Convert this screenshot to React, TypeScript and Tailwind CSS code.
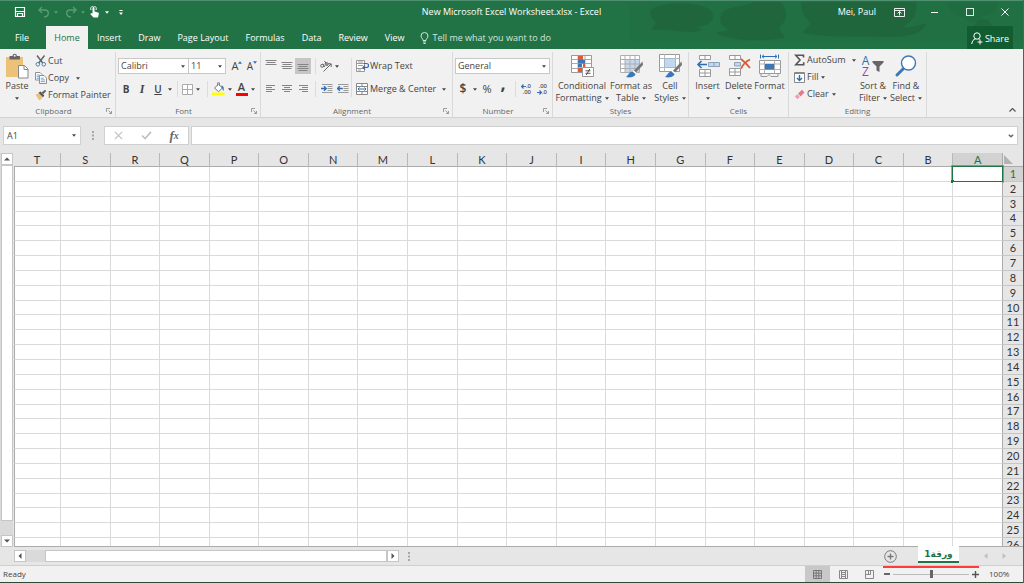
import type { ReactNode } from 'react';
import clsx from 'clsx';

const TABS = ['Insert', 'Draw', 'Page Layout', 'Formulas', 'Data', 'Review', 'View'];
const COLUMNS = 'TSRQPONMLKJIHGFEDCBA'.split('');
const ROWS = Array.from({ length: 26 }, (_, i) => i + 1);

/* ---------- small shared pieces ---------- */

function Caret({ className }: { className?: string }) {
  return (
    <svg viewBox="0 0 5 3" className={clsx('h-[3px] w-1 shrink-0', className)} aria-hidden="true">
      <path d="M0 0h5L2.5 3z" fill="currentColor" />
    </svg>
  );
}

interface ToolProps {
  label: string;
  className?: string;
  children: ReactNode;
}

function Tool({ label, className, children }: ToolProps) {
  return (
    <button type="button" aria-label={label} className={clsx('flex h-4 shrink-0 items-center justify-center', className)}>
      {children}
    </button>
  );
}

function Divider() {
  return <span className="mx-1 h-4 w-px shrink-0 bg-[#dcdcdc]" />;
}

interface GroupProps {
  title: string;
  launcher?: boolean;
  className?: string;
  children: ReactNode;
}

function Group({ title, launcher, className, children }: GroupProps) {
  return (
    <section aria-label={title} className={clsx('flex shrink-0 flex-col border-r border-[#dadada]', className)}>
      <div className="h-[54px]">{children}</div>
      <div className="flex h-3 items-center text-[8px] leading-3 text-[#666]">
        <span className="flex-1 text-center">{title}</span>
        {launcher && (
          <button type="button" aria-label={`${title} settings`} className="mr-[3px]">
            <svg viewBox="0 0 6 6" className="size-[6px]" fill="none" stroke="#888" strokeWidth=".8">
              <path d="M.5 4V.5H4M2.5 2.5l3 3M5.5 3v2.5H3" />
            </svg>
          </button>
        )}
      </div>
    </section>
  );
}

interface BigToolProps {
  lines: [string, string?];
  icon: ReactNode;
  className?: string;
}

function BigTool({ lines, icon, className }: BigToolProps) {
  const [first, second] = lines;
  return (
    <button type="button" className={clsx('flex shrink-0 flex-col items-center leading-3', className)}>
      <span className="flex h-7 items-center justify-center">{icon}</span>
      <span className="whitespace-nowrap">{first}</span>
      <span className="flex h-3 items-center gap-[3px] whitespace-nowrap">
        {second}
        <Caret />
      </span>
    </button>
  );
}

/* ---------- icons ---------- */

function PasteIcon() {
  return (
    <svg viewBox="0 0 24 26" className="h-[26px] w-6">
      <path d="M1 4h17v20H1z" fill="#ecc278" />
      <path d="M4.500 3h3a2.200 2.200 0 0 1 4.400 0h3v3.500H4.500z" fill="#666" />
      <circle cx="9.700" cy="2.800" r="1" fill="#f1f1f1" />
      <path d="M13.500 12.500h6l3.500 3.500v9h-9.500z" fill="#fff" stroke="#888" />
      <path d="M19 12.500V16.500h4" fill="none" stroke="#888" />
    </svg>
  );
}

function CutIcon() {
  return (
    <svg viewBox="0 0 12 12" className="size-3" fill="none">
      <path d="M2 .5 7.800 8M9.500 .5 3.800 8" stroke="#666" strokeWidth="1.500" />
      <circle cx="2.800" cy="9.300" r="1.800" stroke="#4a7fb8" />
      <circle cx="8.800" cy="9.300" r="1.800" stroke="#4a7fb8" />
    </svg>
  );
}

function CopyIcon() {
  return (
    <svg viewBox="0 0 12 12" className="size-3" fill="#fff" stroke="#777" strokeWidth=".8">
      <path d="M.5 .5h4.500l2 2V8H.5z" />
      <path d="M1.700 3h3M1.700 4.700h3M1.700 6.300h3" stroke="#5b8fc4" />
      <path d="M4.500 3.500H9l2.500 2.500v5.500h-7z" />
      <path d="M5.800 6.200h3M5.800 7.900h4.400M5.800 9.600h4.400" stroke="#5b8fc4" />
    </svg>
  );
}

function PainterIcon() {
  return (
    <svg viewBox="0 0 12 12" className="size-3">
      <path d="M.5 5.500 4 4l4 4-2 2.500-2 .8z" fill="#ecc278" />
      <path d="M3.500 3.800 5.500 2.500l3.800 4L8 8.200z" fill="#555" />
      <path d="M6.500 3.500 10 .800 11.300 2 8.300 5.300z" fill="#666" />
    </svg>
  );
}

function BordersIcon() {
  return (
    <svg viewBox="0 0 11 11" className="size-[11px]" fill="#fff" stroke="#aaa">
      <path d="M.5 .5h10v10H.5zM5.500 .5v10M.5 5.500h10" />
    </svg>
  );
}

function FillColorIcon() {
  return (
    <svg viewBox="0 0 13 14" className="h-[14px] w-[13px]">
      <path d="M2.500 6 6.500 2.200l4 3.800-4 3.600z" fill="#fff" stroke="#777" />
      <path d="M5.500 4V.8h2V4" fill="none" stroke="#777" strokeWidth=".8" />
      <path d="M9.500 3.500c2.200.300 2.800 2.500 2 5.500-1-.500-.500-2.500-2-3.500z" fill="#3c76b5" />
      <path d="M0 10.500h12.500v3H0z" fill="#ff0" />
    </svg>
  );
}

interface LinesIconProps {
  widths: number[];
  align?: 'left' | 'center' | 'right';
  offset?: 'top' | 'middle' | 'bottom';
}

function LinesIcon({ widths, align = 'center', offset = 'middle' }: LinesIconProps) {
  const top = { top: 0, middle: 2, bottom: 4 }[offset];
  return (
    <svg viewBox="0 0 12 12" className="size-3" stroke="#858585">
      {widths.map((w, i) => {
        const x = { left: 1, center: (12 - w) / 2, right: 11 - w }[align];
        const y = top + i * 2 + 0.5;
        return <path key={i} d={`M${x} ${y}h${w}`} />;
      })}
    </svg>
  );
}

function OrientationIcon() {
  return (
    <svg viewBox="0 0 12 12" className="size-3" fill="none" stroke="#666">
      <path d="M3.500 11.500 11 4M8 3.800h3.200V7" />
      <circle cx="2.200" cy="5.800" r="1.500" />
      <path d="M2.800 3.800 4.800 7M4.500 1l3 4.500" />
      <circle cx="6.600" cy="4" r="1.500" />
    </svg>
  );
}

function IndentIcon({ direction }: { direction: 'in' | 'out' }) {
  return (
    <svg viewBox="0 0 12 12" className="size-3" fill="none">
      <path d="M1 1.500h10.500M6.500 3.500h5M6.500 5.500h5M6.500 7.500h5M1 9.500h10.500" stroke="#999" />
      <path
        d={direction === 'in' ? 'M0 5.500h5M3 3.300l2.200 2.200L3 7.700' : 'M.8 5.500h5M2.800 3.300.600 5.500l2.200 2.200'}
        stroke="#2e6db4"
        strokeWidth="1.400"
      />
    </svg>
  );
}

function WrapIcon() {
  return (
    <svg viewBox="0 0 13 12" className="h-3 w-[13px]" fill="none">
      <path d="M.5 .5h8v11h-8z" fill="#fff" stroke="#999" />
      <path d="M.5 3.500h8M.5 8.500h8" stroke="#999" />
      <path d="M2 5.500h5M2 2h5M2 10h3" stroke="#888" strokeWidth=".8" />
      <path d="M8 3.500h2.500a1.800 1.800 0 0 1 0 4H7M9 5.500l-2 2 2 2" stroke="#2e6db4" strokeWidth="1.200" />
    </svg>
  );
}

function MergeIcon() {
  return (
    <svg viewBox="0 0 12 12" className="size-3" fill="none">
      <path d="M.5 .5h11v11H.5z" fill="#fff" stroke="#888" />
      <path d="M.5 3.500h11M.5 8.500h11M6 .5v3M6 8.500v3" stroke="#888" />
      <path d="M2 6h8M3.500 4.500 2 6l1.500 1.500M8.500 4.500 10 6 8.500 7.500" stroke="#2e6db4" />
    </svg>
  );
}

function DecimalArrow({ left }: { left?: boolean }) {
  return (
    <svg viewBox="0 0 5 5" className="size-[5px]" fill="none" stroke="#2e6db4" strokeWidth="1.200">
      <path d={left ? 'M5 2.500H1M2.500 .5l-2 2 2 2' : 'M0 2.500h4M2.500 .5l2 2-2 2'} />
    </svg>
  );
}

function DecimalIcon({ increase }: { increase?: boolean }) {
  return (
    <span className="flex flex-col text-[6px] leading-[6px] font-semibold text-[#555]">
      <span className="flex items-center justify-end">
        {increase && <DecimalArrow left />}
        {increase ? '.0' : '.00'}
      </span>
      <span className="flex items-center justify-end">
        {!increase && <DecimalArrow />}
        {increase ? '.00' : '.0'}
      </span>
    </span>
  );
}

function ConditionalIcon() {
  return (
    <svg viewBox="0 0 24 24" className="size-6" fill="none">
      <path d="M1.500 1.500h20v17h-20z" fill="#fff" stroke="#999" />
      <path d="M1.500 5.500h20M1.500 9.500h20M1.500 14.500h20M8 1.500v17M15 1.500v17" stroke="#aaa" />
      <path d="M8 2h5v4H8zM8 14h4v4H8z" fill="#dd5a35" />
      <path d="M8 6h7v3.500H8zM8 10h4v3.500H8z" fill="#3c78b8" />
      <path d="M13 9.500h2V13h-2z" fill="#dd5a35" />
      <path d="M12.500 13.500h11v9h-11z" fill="#fff" stroke="#999" />
      <path d="M15.500 16.800h5M15.500 19.300h5M19.800 15l-3.500 6" stroke="#555" />
    </svg>
  );
}

function BrushTip() {
  return (
    <>
      <path d="M23.500 7.500 15 16.500l2 2L24 11z" fill="#777" />
      <path d="M14.500 16.500 17.500 19 16 20.500 13 18z" fill="#fff" />
      <path d="M13.500 17.500c-3 0-4 3.500-6.500 5.500 4 1 9 0 9.500-3z" fill="#3c78b8" />
    </>
  );
}

function FormatTableIcon() {
  return (
    <svg viewBox="0 0 24 24" className="size-6" fill="none">
      <path d="M1.500 1.500h19v17h-19z" fill="#fff" />
      <path d="M6 6h14.500v12.500H6z" fill="#c3d8ee" />
      <path d="M1.500 1.500h19v17h-19zM1.500 5.500h19M1.500 10h19M1.500 14.500h19M6 1.500v17M11 1.500v17M16 1.500v17" stroke="#aeaeae" />
      <BrushTip />
    </svg>
  );
}

function CellStylesIcon() {
  return (
    <svg viewBox="0 0 24 24" className="size-6" fill="none">
      <path d="M1.500 .5h20v17h-20z" fill="#fff" stroke="#999" />
      <path d="M1.500 4.500h20M1.500 13.500h20M6.500 .5v17M17.500 .5v17" stroke="#b8b8b8" />
      <path d="M6.500 4.500h11v9h-11z" fill="#c3d8ee" stroke="#a0b8d0" />
      <BrushTip />
    </svg>
  );
}

function InsertIcon() {
  return (
    <svg viewBox="0 0 24 24" className="size-6" fill="#fff">
      <path d="M3.500 1.500h11v4h-11zM9 1.500v4M3.500 15.500h11v7h-11zM9 15.500v7M3.500 19h11" stroke="#999" />
      <path d="M12.500 8.500h11v4h-11zM18 8.500v4" fill="#c3d8ee" stroke="#8ba3bb" />
      <path d="M11 10.500H2M5.500 7 2 10.500 5.500 14" fill="none" stroke="#2e6db4" strokeWidth="1.600" />
    </svg>
  );
}

function DeleteIcon() {
  return (
    <svg viewBox="0 0 24 24" className="size-6" fill="#fff">
      <path d="M2.500 1.500h11v4h-11zM8 1.500v4M2.500 14.500h11v7h-11zM8 14.500v7M2.500 18h11" stroke="#999" />
      <path d="M7.500 8.500h6v3.500h-6z" fill="#c3d8ee" stroke="#8ba3bb" />
      <path d="M14 5c3 2.500 6.500 6 9 9M23 5.500c-3.500 1.500-7 5-9 9" fill="none" stroke="#dd5a35" strokeWidth="1.800" />
    </svg>
  );
}

function FormatIcon() {
  return (
    <svg viewBox="0 0 24 24" className="size-6" fill="none">
      <path d="M2.500 .5v4M20.500 .5v4M4 2.500h15M6 .8 4 2.500 6 4.200M17 .8l2 1.700-2 1.700" stroke="#2e6db4" />
      <path d="M1.500 6.500h21v13h-21z" fill="#fff" stroke="#999" />
      <path d="M1.500 10h21M1.500 15.500h21M6.500 6.500v13M16.500 6.500v13" stroke="#b0b0b0" />
      <path d="M7 10h9v5.500H7z" fill="#3c78b8" />
      <path d="M3 20v2.500h6l2-2 2 2h7V20" stroke="#999" />
    </svg>
  );
}

function SumIcon() {
  return (
    <svg viewBox="0 0 11 12" className="h-3 w-[11px]" fill="none" stroke="#555" strokeWidth="1.600">
      <path d="M9.500 3.500V1.300H1.800L6 6l-4.200 4.700h7.900V8.300" />
    </svg>
  );
}

function FillDownIcon() {
  return (
    <svg viewBox="0 0 11 11" className="size-[11px]" fill="none">
      <path d="M.5 .5h10v10H.5z" fill="#fff" stroke="#888" />
      <path d="M.5 1.500h10" stroke="#888" />
      <path d="M5.500 3v5.500M3 6l2.500 2.500L8 6" stroke="#2e6db4" strokeWidth="1.400" />
    </svg>
  );
}

function EraserIcon() {
  return (
    <svg viewBox="0 0 11 11" className="size-[11px]">
      <path d="M4 4.500 8 .8l2.500 2.700L6.500 7.500z" fill="#e8788c" />
      <path d="M3.300 5.200 5.800 8 3.500 10.200 .8 7.500z" fill="#ef9dac" />
    </svg>
  );
}

function SortFilterIcon() {
  return (
    <span className="flex items-center text-[12px] leading-[11px] font-medium">
      <span className="flex flex-col items-center">
        <span className="text-[#2e6db4]">A</span>
        <span className="text-[#8b49b0]">Z</span>
      </span>
      <svg viewBox="0 0 12 12" className="ml-[3px] size-3">
        <path d="M.5 1h11v1.500L7.500 6.500V12l-3-1.500v-4l-4-4z" fill="#666" />
      </svg>
    </span>
  );
}

function FindIcon() {
  return (
    <svg viewBox="0 0 24 24" className="size-6" fill="none">
      <path d="M9.500 14.500 3 21" stroke="#3c78b8" strokeWidth="3" strokeLinecap="round" />
      <circle cx="14.500" cy="9" r="7" fill="#fff" stroke="#3c78b8" strokeWidth="1.400" />
    </svg>
  );
}

/* ---------- window header ---------- */

function HeaderPattern() {
  return (
    <svg viewBox="0 0 394 40" className="absolute top-0 right-0 h-10 w-[394px]" fill="#1f643c" aria-hidden="true">
      <path d="M0 1h394v39H0z" opacity=".18" />
      <path d="M22 10c4-10 60-12 62 4 1 8-8 11-16 12 6 2 5 3 2 4-14 3-30-2-48-1 3-4 5-6 4-9-4-3-6-6-4-10z" opacity=".8" />
      <path d="M92 14C96 4 116 7 124 1h28c7 8 7 18-2 26l6 10c-20 3-55 4-69-5 3-3 8 0 12-3-7-5-9-9-7-15z" opacity=".8" />
      <path d="M172 1h115c2 12-3 20-14 25 8 1 16-1 24-4-2 12-22 14-40 14-26-1-56 1-84-4 4-5 8-6 8-11-7-5-9-12-9-20z" opacity=".8" />
      <path d="M318 1h50c2 8-4 13-13 14-5 7-14 8-20 2-9-1-16-8-17-16z" opacity=".3" />
      <circle cx="354" cy="27" r="9" opacity=".7" />
    </svg>
  );
}

function TitleBar() {
  return (
    <div className="relative mb-[3px] grid h-[22px] grid-cols-[1fr_auto_1fr] items-center">
      <div className="flex items-center pl-[14px] text-[#5a9b76]">
        <Tool label="Save" className="mr-3 text-white">
          <svg viewBox="0 0 12 12" className="size-3" fill="none" stroke="currentColor">
            <path d="M1.500 1.500h9v9h-9zM3.500 10.500V7.500h5v3M2 5.500h8" strokeWidth="1.200" />
          </svg>
        </Tool>
        <Tool label="Undo" className="mr-1">
          <svg viewBox="0 0 12 12" className="size-3" fill="none" stroke="currentColor" strokeWidth="1.400">
            <path d="M4 1 1 4l3 3M1 4h6a3.300 3.300 0 0 1 0 6.700H6" />
          </svg>
        </Tool>
        <Caret className="mr-[7px]" />
        <Tool label="Redo" className="mr-1">
          <svg viewBox="0 0 12 12" className="size-3" fill="none" stroke="currentColor" strokeWidth="1.400">
            <path d="m8 1 3 3-3 3M11 4H5a3.300 3.300 0 0 0 0 6.700h1" />
          </svg>
        </Tool>
        <Caret className="mr-1" />
        <Tool label="Touch or mouse mode" className="mr-1 text-white">
          <svg viewBox="0 0 12 12" className="size-3" fill="currentColor">
            <path d="M3.500 7.500V2a1 1 0 0 1 2 0v3.500l3.500 1c.8.300 1 .8.800 1.500L9 11.500H4.500L1.200 8c.8-1 1.600-.8 2.300-.5z" />
            <path d="M2 4A2.800 2.800 0 1 1 7 4" fill="none" stroke="currentColor" />
          </svg>
        </Tool>
        <Caret className="mr-[10px] text-white" />
        <Tool label="Customize toolbar" className="text-white">
          <svg viewBox="0 0 5 6" className="h-[5px] w-1" fill="currentColor">
            <path d="M.5 0h4v1h-4zM0 3h5L2.500 6z" />
          </svg>
        </Tool>
      </div>
      <h1 className="text-white">New Microsoft Excel Worksheet.xlsx - Excel</h1>
      <div className="flex items-center justify-end text-white">
        <span className="mr-[6px]">Mei, Paul</span>
        <Tool label="Ribbon display options" className="w-[35px]">
          <svg viewBox="0 0 11 9" className="h-[9px] w-[11px]" fill="none" stroke="currentColor">
            <path d="M.5 .5h10v8H.5zM.5 2.500h10M5.500 7.500v-4M3.500 5.500l2-2 2 2" strokeWidth=".9" />
          </svg>
        </Tool>
        <Tool label="Minimize" className="w-[35px]">
          <span className="h-px w-[7px] bg-white" />
        </Tool>
        <Tool label="Maximize" className="w-[35px]">
          <span className="size-2 border border-[#dceae2]" />
        </Tool>
        <Tool label="Close" className="w-9">
          <svg viewBox="0 0 8 8" className="size-2" fill="none" stroke="currentColor">
            <path d="m.5 .5 7 7M7.500 .5l-7 7" />
          </svg>
        </Tool>
      </div>
    </div>
  );
}

function TabBar() {
  return (
    <nav className="relative flex h-[23px] items-stretch text-white">
      <button type="button" className="w-[46px] pr-[2px]">File</button>
      <button type="button" className="w-[42px] bg-[#f1f1f1] text-[#217346]">Home</button>
      <div className="ml-px flex gap-px">
        {TABS.map((tab) => (
          <button key={tab} type="button" className="px-2">
            {tab}
          </button>
        ))}
      </div>
      <button type="button" className="ml-2 flex items-center gap-[3px] text-[#d3e5da]">
        <svg viewBox="0 0 9 12" className="h-3 w-[9px]" fill="none" stroke="currentColor">
          <path d="M3 8.500C3 6.500 1 6 1 4a3.500 3.500 0 0 1 7 0c0 2-2 2.500-2 4.500zM3 10h3M3.500 11.500h2" />
        </svg>
        Tell me what you want to do
      </button>
      <button type="button" className="mr-[10px] ml-auto flex w-[46px] items-center justify-center gap-[2px] bg-[#125c31] pt-[2px]">
        <svg viewBox="0 0 12 13" className="h-[13px] w-3" fill="none" stroke="currentColor">
          <circle cx="6" cy="4" r="3.200" />
          <path d="M.8 12c.2-3 1.800-4.800 3.700-5M7.500 7l1 .6M9 7.500v5M6.500 10h5" />
        </svg>
        Share
      </button>
    </nav>
  );
}

/* ---------- ribbon ---------- */

function ClipboardGroup() {
  return (
    <Group title="Clipboard" launcher className="w-[115px]">
      <div className="flex pl-[3px]">
        <BigTool lines={['Paste']} icon={<PasteIcon />} className="w-[26px]" />
        <div className="mt-px ml-[5px] flex flex-col gap-px">
          <button type="button" className="flex h-4 items-center gap-px"><CutIcon />Cut</button>
          <button type="button" className="flex h-4 items-center gap-px">
            <CopyIcon />Copy<Caret className="ml-[6px]" />
          </button>
          <button type="button" className="flex h-4 items-center gap-px whitespace-nowrap"><PainterIcon />Format Painter</button>
        </div>
      </div>
    </Group>
  );
}

interface PickerProps {
  label: string;
  value: string;
  className?: string;
}

function Picker({ label, value, className }: PickerProps) {
  return (
    <label className={clsx('relative flex h-4 shrink-0 items-center border border-[#c8c8c8] bg-white', className)}>
      <select aria-label={label} defaultValue={value} className="w-full appearance-none bg-transparent pl-[2px] outline-none">
        <option>{value}</option>
      </select>
      <Caret className="pointer-events-none absolute right-[3px]" />
    </label>
  );
}

function FontGroup() {
  return (
    <Group title="Font" launcher className="w-[145px]">
      <div className="flex flex-col gap-[7px] pt-[6px] pl-[2px]">
        <div className="flex items-center">
          <Picker label="Font" value="Calibri" className="w-[71px]" />
          <Picker label="Font size" value="11" className="w-[37px] border-l-0" />
          <Tool label="Increase font size" className="ml-1 w-[14px] text-[11px]">
            A<Caret className="mb-2 rotate-180 text-[#2e6db4]" />
          </Tool>
          <Tool label="Decrease font size" className="ml-px w-[14px] text-[10px]">
            A<Caret className="mb-2 text-[#2e6db4]" />
          </Tool>
        </div>
        <div className="flex items-center">
          <Tool label="Bold" className="w-4 text-[10px] font-bold">B</Tool>
          <Tool label="Italic" className="w-4 font-['Liberation_Serif',serif] text-[12px] font-bold italic">I</Tool>
          <Tool label="Underline" className="w-4 text-[10px] font-semibold underline">U</Tool>
          <Tool label="Underline style" className="w-[7px]"><Caret /></Tool>
          <Divider />
          <Tool label="Borders" className="w-[11px]"><BordersIcon /></Tool>
          <Tool label="Border style" className="w-[10px]"><Caret /></Tool>
          <Divider />
          <Tool label="Fill color" className="w-[13px]"><FillColorIcon /></Tool>
          <Tool label="Fill color options" className="w-[10px]"><Caret /></Tool>
          <Tool label="Font color" className="w-[13px]">
            <span className="flex h-[14px] w-3 items-end justify-center border-b-3 border-[#f00] text-[11px] leading-3 font-semibold">A</span>
          </Tool>
          <Tool label="Font color options" className="w-[10px]"><Caret /></Tool>
        </div>
      </div>
    </Group>
  );
}

function AlignmentGroup() {
  return (
    <Group title="Alignment" launcher className="w-[192px]">
      <div className="flex">
        <div className="flex w-[90px] flex-col gap-[7px] pt-[6px] pl-[2px]">
          <div className="flex items-center">
            <Tool label="Top align" className="w-4"><LinesIcon widths={[11, 9, 11]} offset="top" /></Tool>
            <Tool label="Middle align" className="w-4"><LinesIcon widths={[11, 9, 11, 9]} /></Tool>
            <Tool label="Bottom align" className="w-4 bg-[#c6c6c6]"><LinesIcon widths={[11, 9, 11, 9]} offset="bottom" /></Tool>
            <Divider />
            <Tool label="Orientation" className="w-3"><OrientationIcon /></Tool>
            <Tool label="Orientation options" className="w-[10px]"><Caret /></Tool>
          </div>
          <div className="flex items-center">
            <Tool label="Align left" className="w-4"><LinesIcon widths={[9, 6, 9, 6]} align="left" /></Tool>
            <Tool label="Center" className="w-4"><LinesIcon widths={[10, 6, 10, 6]} /></Tool>
            <Tool label="Align right" className="w-4"><LinesIcon widths={[9, 6, 9, 6]} align="right" /></Tool>
            <Divider />
            <Tool label="Increase indent" className="w-[14px]"><IndentIcon direction="in" /></Tool>
            <Tool label="Decrease indent" className="ml-[2px] w-[14px]"><IndentIcon direction="out" /></Tool>
          </div>
        </div>
        <div className="mt-[6px] flex flex-col gap-[7px] border-l border-[#dcdcdc] pl-1">
          <button type="button" className="flex h-4 items-center gap-px whitespace-nowrap"><WrapIcon />Wrap Text</button>
          <button type="button" className="flex h-4 items-center gap-[2px] whitespace-nowrap">
            <MergeIcon />Merge &amp; Center<Caret className="ml-1" />
          </button>
        </div>
      </div>
    </Group>
  );
}

function NumberGroup() {
  return (
    <Group title="Number" launcher className="w-[100px]">
      <div className="flex flex-col gap-[7px] pt-[6px] pl-[2px]">
        <Picker label="Number format" value="General" className="w-[95px]" />
        <div className="flex items-center">
          <Tool label="Accounting format" className="w-4 text-[12px] font-semibold">$</Tool>
          <Tool label="Accounting format options" className="w-2"><Caret /></Tool>
          <Tool label="Percent" className="w-4 text-[11px]">%</Tool>
          <Tool label="Comma style" className="w-4 pb-3 text-[18px] leading-3 font-bold">,</Tool>
          <Divider />
          <Tool label="Increase decimal" className="w-3"><DecimalIcon increase /></Tool>
          <Tool label="Decrease decimal" className="ml-1 w-3"><DecimalIcon /></Tool>
        </div>
      </div>
    </Group>
  );
}

function StylesGroup() {
  return (
    <Group title="Styles" className="w-[136px]">
      <div className="flex pl-[3px]">
        <BigTool lines={['Conditional', 'Formatting']} icon={<ConditionalIcon />} className="w-[52px]" />
        <BigTool lines={['Format as', 'Table']} icon={<FormatTableIcon />} className="w-[46px]" />
        <BigTool lines={['Cell', 'Styles']} icon={<CellStylesIcon />} className="w-8" />
      </div>
    </Group>
  );
}

function CellsGroup() {
  return (
    <Group title="Cells" className="w-[100px]">
      <div className="flex pl-[3px]">
        <BigTool lines={['Insert']} icon={<InsertIcon />} className="w-[31px]" />
        <BigTool lines={['Delete']} icon={<DeleteIcon />} className="w-[31px]" />
        <BigTool lines={['Format']} icon={<FormatIcon />} className="w-[31px]" />
      </div>
    </Group>
  );
}

function EditingGroup() {
  return (
    <Group title="Editing" className="w-[138px]">
      <div className="flex pl-[5px]">
        <div className="flex w-[62px] flex-col gap-px">
          <button type="button" className="flex h-4 items-center gap-[2px] whitespace-nowrap"><SumIcon />AutoSum<Caret className="ml-auto" /></button>
          <button type="button" className="flex h-4 items-center gap-[2px]"><FillDownIcon />Fill<Caret className="ml-px" /></button>
          <button type="button" className="flex h-4 items-center gap-[2px]"><EraserIcon />Clear<Caret className="ml-px" /></button>
        </div>
        <BigTool lines={['Sort &', 'Filter']} icon={<SortFilterIcon />} className="w-[34px]" />
        <BigTool lines={['Find &', 'Select']} icon={<FindIcon />} className="w-8" />
      </div>
    </Group>
  );
}

function Ribbon() {
  return (
    <div className="flex h-[69px] shrink-0 border-b border-[#d2d2d2] bg-[#f1f1f1] pt-[3px] pl-px">
      <ClipboardGroup />
      <FontGroup />
      <AlignmentGroup />
      <NumberGroup />
      <StylesGroup />
      <CellsGroup />
      <EditingGroup />
      <Tool label="Collapse ribbon" className="mr-[7px] -mb-px ml-auto self-end">
        <svg viewBox="0 0 7 4" className="h-1 w-[7px]" fill="none" stroke="#555">
          <path d="m.5 3.500 3-3 3 3" strokeWidth="1.200" />
        </svg>
      </Tool>
    </div>
  );
}

/* ---------- formula bar ---------- */

function DragDots() {
  return (
    <svg viewBox="0 0 2 9" className="h-[9px] w-[2px] shrink-0" fill="#a8a8a8">
      <path d="M0 0h2v2H0zM0 3.500h2v2H0zM0 7h2v2H0z" />
    </svg>
  );
}

function FormulaBar() {
  return (
    <div className="flex shrink-0 items-center pt-2 pr-[5px] pb-2 pl-[3px]">
      <div className="flex h-[19px] w-[78px] shrink-0 items-center border border-[#d0d0d0] bg-white pr-1">
        <input aria-label="Name box" defaultValue="A1" className="w-full min-w-0 bg-transparent pl-[3px] outline-none" />
        <Caret />
      </div>
      <span className="flex w-[23px] justify-center"><DragDots /></span>
      <div className="flex h-[19px] w-[85px] shrink-0 items-center justify-around border border-[#d0d0d0] bg-white text-[#c0c0c0]">
        <Tool label="Cancel" className="w-6">
          <svg viewBox="0 0 10 10" className="size-[9px]" fill="none" stroke="currentColor" strokeWidth="1.300"><path d="m1 1 8 8M9 1 1 9" /></svg>
        </Tool>
        <Tool label="Enter" className="w-6">
          <svg viewBox="0 0 12 10" className="h-[9px] w-[11px]" fill="none" stroke="currentColor" strokeWidth="1.800"><path d="m1 5 3.500 3.500L11 1" /></svg>
        </Tool>
        <Tool label="Insert function" className="w-6 items-baseline font-['Liberation_Serif',serif] text-[13px] font-bold text-[#666] italic">
          f<span className="text-[10px]">x</span>
        </Tool>
      </div>
      <div className="ml-[2px] flex h-[19px] flex-1 items-center border border-[#d0d0d0] bg-white pr-[3px]">
        <input aria-label="Formula" className="w-full min-w-0 bg-transparent pl-1 outline-none" />
        <svg viewBox="0 0 7 5" className="h-1 w-[6px]" fill="none" stroke="#666" strokeWidth="1.800"><path d="m.8 .8 2.700 2.700L6.200 .8" /></svg>
      </div>
    </div>
  );
}

/* ---------- worksheet ---------- */

function ScrollButton({ label, path, className }: { label: string; path: string; className?: string }) {
  return (
    <button type="button" aria-label={label} className={clsx('flex shrink-0 items-center justify-center border border-[#c6c6c6] bg-white', className)}>
      <svg viewBox="0 0 6 6" className="size-[6px]" fill="#555"><path d={path} /></svg>
    </button>
  );
}

function Sheet() {
  return (
    <div className="flex min-h-0 flex-1">
      <div className="mr-px flex w-[13px] shrink-0 flex-col bg-[#dadada] pl-px">
        <ScrollButton label="Scroll up" path="M0 4.500h6L3 1.500z" className="h-3" />
        <div className="flex-1 border border-[#c6c6c6] bg-white" />
        <div className="h-[14px] shrink-0" />
        <ScrollButton label="Scroll down" path="M0 1.500h6L3 4.500z" className="h-3" />
      </div>
      <div className="min-w-0 flex-1 overflow-hidden border-b border-[#ababab]">
        <table className="h-[calc(100%+7px)] w-full table-fixed border-separate border-spacing-0 text-center font-['Lato','Open_Sans',sans-serif] text-[11px] leading-3 text-[#333]">
          <colgroup>
            <col className="w-[47px]" />
            {COLUMNS.slice(1).map((col) => <col key={col} />)}
            <col className="w-5" />
          </colgroup>
          <thead>
            <tr className="h-[14px]">
              {COLUMNS.map((col) => (
                <th
                  key={col}
                  scope="col"
                  className={clsx(
                    'border-r border-b p-0 font-normal',
                    col === 'A' ? 'border-r-[#ababab] border-b-[#217346] bg-[#d2d2d2] text-[#217346]' : 'border-r-[#b8b8b8] border-b-[#ababab]',
                  )}
                >
                  {col}
                </th>
              ))}
              <th className="border-b border-[#ababab] p-0">
                <svg viewBox="0 0 9 9" className="ml-px size-[9px]" fill="#b2b2b2"><path d="M0 0v9h9z" /></svg>
              </th>
            </tr>
          </thead>
          <tbody>
            {ROWS.map((row) => (
              <tr key={row}>
                {COLUMNS.map((col) => (
                  <td
                    key={col}
                    className={clsx(
                      'border-r border-b border-[#dadada] bg-white p-0',
                      col === 'T' && 'border-l border-l-[#ababab]',
                      col === 'A' && 'relative border-r-[#ababab]',
                    )}
                  >
                    {col === 'A' && row === 1 && (
                      <span className="absolute -inset-px border border-[#217346] outline outline-[#217346]/50">
                        <span className="absolute -bottom-[2px] -left-[2px] size-[3px] bg-[#217346]" />
                      </span>
                    )}
                  </td>
                ))}
                <th
                  scope="row"
                  className={clsx('border-b border-[#c6c6c6] p-0 font-normal', row === 1 && 'bg-[#d2d2d2] text-[#217346]')}
                >
                  {row}
                </th>
              </tr>
            ))}
          </tbody>
        </table>
      </div>
    </div>
  );
}

function SheetTabs() {
  return (
    <div className="flex h-[18px] shrink-0 items-center pl-[14px]">
      <div className="flex h-3 w-[385px] items-stretch bg-[#dadada]">
        <ScrollButton label="Scroll left" path="M4.500 0v6L1.500 3z" className="w-3" />
        <div className="w-[19px] shrink-0" />
        <div className="flex-1 border border-[#c6c6c6] bg-white" />
        <ScrollButton label="Scroll right" path="M1.500 0v6L4.500 3z" className="w-3" />
      </div>
      <span className="ml-[9px]"><DragDots /></span>
      <button type="button" aria-label="New sheet" className="ml-auto">
        <svg viewBox="0 0 13 13" className="size-[13px]" fill="none" stroke="#777">
          <circle cx="6.500" cy="6.500" r="5.800" />
          <path d="M6.500 3.500v6M3.500 6.500h6" strokeWidth="1.300" />
        </svg>
      </button>
      <button
        type="button"
        lang="ar"
        className="-mt-px mr-6 ml-[21px] h-[17px] w-[41px] self-start border-b-2 border-[#217346] bg-white font-['DejaVu_Sans',sans-serif] text-[9px] leading-[14px] font-bold text-[#217346]"
      >
        ورقة1
      </button>
      <div className="flex gap-3 pr-4 text-[#c0c0c0]">
        <svg viewBox="0 0 6 6" className="size-[6px]" fill="currentColor"><path d="M4.500 0v6L1 3z" /></svg>
        <svg viewBox="0 0 6 6" className="size-[6px]" fill="currentColor"><path d="M1.500 0v6L5 3z" /></svg>
      </div>
    </div>
  );
}

function StatusBar() {
  return (
    <footer className="flex h-[18px] shrink-0 items-center border-t border-b border-t-[#cfcfcf] border-b-[#2f4a34] bg-[#f1f1f1] pl-[3px] text-[8px]">
      <span>Ready</span>
      <div className="ml-auto flex items-stretch self-stretch">
        <Tool label="Normal view" className="w-[25px] self-stretch bg-[#c8c8c8]">
          <svg viewBox="0 0 9 9" className="size-[9px]" fill="none" stroke="#777"><path d="M.5 .5h8v8h-8zM.5 3.200h8M.5 5.800h8M3.200 .5v8M5.800 .5v8" /></svg>
        </Tool>
        <Tool label="Page layout view" className="w-[27px]">
          <svg viewBox="0 0 9 9" className="size-[9px]" fill="none" stroke="#888"><path d="M.5 .5h8v8h-8zM2.500 1v7M6.500 1v7M3 2.500h3M3 4.500h3M3 6.500h3" /></svg>
        </Tool>
        <Tool label="Page break view" className="w-6">
          <svg viewBox="0 0 9 9" className="size-[9px]" fill="none" stroke="#888"><path d="M.5 .5h8v8h-8zM3.500 .5v4M5.500 .5v4M.5 4.500h5" /></svg>
        </Tool>
      </div>
      <div className="relative ml-[2px] flex w-24 items-center gap-[2px] self-stretch">
        <span className="absolute inset-x-0 top-0 h-[2px] bg-[#ff3b3b]" />
        <Tool label="Zoom out" className="w-2"><span className="h-[2px] w-[6px] bg-[#666]" /></Tool>
        <input
          type="range"
          aria-label="Zoom"
          className="h-3 w-full min-w-0 flex-1 appearance-none bg-[linear-gradient(#bbb,#bbb)] bg-[length:100%_1px] bg-center bg-no-repeat [&::-webkit-slider-thumb]:h-2 [&::-webkit-slider-thumb]:w-[3px] [&::-webkit-slider-thumb]:appearance-none [&::-webkit-slider-thumb]:bg-[#666]"
        />
        <Tool label="Zoom in" className="w-2">
          <svg viewBox="0 0 7 7" className="size-[7px]" stroke="#555" strokeWidth="1.400"><path d="M3.500 0v7M0 3.500h7" /></svg>
        </Tool>
      </div>
      <span className="w-11 pl-[10px]">100%</span>
    </footer>
  );
}

export default function App() {
  return (
    <div className="flex h-screen flex-col overflow-hidden border-r border-[#3f6b50] bg-[#e6e6e6] font-['Open_Sans','Noto_Sans',sans-serif] text-[9px] leading-3 text-[#444]">
      <header className="relative shrink-0 border-t border-[#4f9070] bg-[#217346]">
        <HeaderPattern />
        <TitleBar />
        <TabBar />
      </header>
      <Ribbon />
      <FormulaBar />
      <Sheet />
      <SheetTabs />
      <StatusBar />
    </div>
  );
}
